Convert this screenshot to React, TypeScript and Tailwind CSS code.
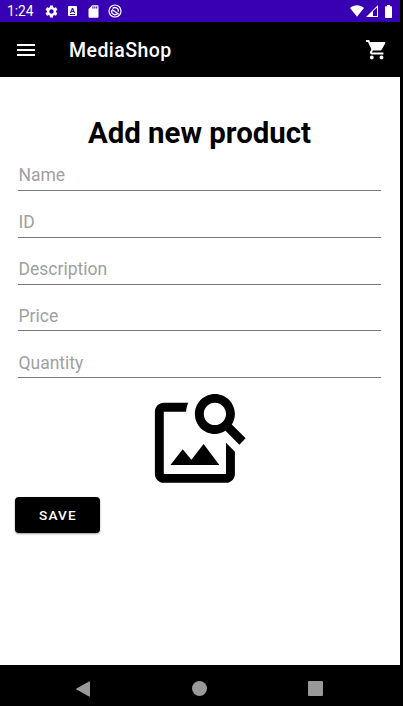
import type { ReactNode } from 'react';

function Icon({ className, children, viewBox = '0 0 24 24' }: { className: string; children: ReactNode; viewBox?: string }) {
  return (
    <svg viewBox={viewBox} fill="currentColor" className={`block shrink-0 ${className}`}>
      {children}
    </svg>
  );
}

function StatusBar() {
  return (
    <div className="flex h-[22px] shrink-0 items-center bg-[#3700b3] pl-[7px] pr-[8px] text-white">
      <span className="w-[36.500px] text-[13.800px] leading-[22px]">1:24</span>
      <Icon className="h-[15px] w-[15px]">
        <path d="M19.14 12.94c.04-.3.06-.61.06-.94 0-.32-.02-.64-.07-.94l2.03-1.58c.18-.14.23-.41.12-.61l-1.92-3.32c-.12-.22-.37-.29-.59-.22l-2.39.96c-.5-.38-1.03-.7-1.62-.94l-.36-2.54c-.04-.24-.24-.41-.48-.41h-3.84c-.24 0-.43.17-.47.41l-.36 2.54c-.59.24-1.13.57-1.62.94l-2.39-.96c-.22-.08-.47 0-.59.22L2.74 8.87c-.12.21-.08.47.12.61l2.03 1.58c-.05.3-.09.63-.09.94s.02.64.07.94l-2.03 1.58c-.18.14-.23.41-.12.61l1.92 3.32c.12.22.37.29.59.22l2.39-.96c.5.38 1.03.7 1.62.94l.36 2.54c.05.24.24.41.48.41h3.84c.24 0 .44-.17.47-.41l.36-2.54c.59-.24 1.13-.56 1.62-.94l2.39.96c.22.08.47 0 .59-.22l1.92-3.32c.12-.22.07-.47-.12-.61l-2.01-1.58zM12 15.6c-1.98 0-3.6-1.62-3.6-3.6s1.62-3.6 3.6-3.6 3.6 1.62 3.6 3.6-1.62 3.6-3.6 3.6z" />
      </Icon>
      <span className="ml-[9.500px] flex h-[10px] w-[9px] items-center justify-center rounded-[1px] bg-white text-[8px] font-bold leading-none text-[#3700b3] underline">A</span>
      <Icon className="ml-[9px] h-[15px] w-[15px]">
        <path fillRule="evenodd" d="M18 2h-8L4.020 8 4 20c0 1.100.9 2 2 2h12c1.100 0 2-.9 2-2V4c0-1.100-.9-2-2-2zM12 7h-1.800V4H12v3zm3 0h-1.800V4H15v3zm3 0h-1.800V4H18v3z" />
      </Icon>
      <Icon className="ml-[7px] h-[14px] w-[14px]" viewBox="0 0 14 14">
        <circle cx="7" cy="7" r="6" fill="none" stroke="currentColor" strokeWidth="1.200" />
        <path d="M9.500 9.500A3.400 3.400 0 0 1 3.700 6.300M4.600 4.500A3.400 3.400 0 0 1 10.300 7.600M4 5.500L10.800 10.300" fill="none" stroke="currentColor" strokeWidth="1.300" />
      </Icon>
      <div className="ml-auto flex items-center">
        <Icon className="h-[12px] w-[14px]" viewBox="0 0 14 12">
          <path d="M0 3C4-.7 10-.7 14 3L7 11.800z" />
        </Icon>
        <Icon className="ml-[2px] h-[12px] w-[12px]" viewBox="0 0 12 12">
          <path fillRule="evenodd" d="M0 12L12 0v12zM7 6.200V11h4V2.400z" />
        </Icon>
        <Icon className="ml-[7px] h-[13px] w-[7px]" viewBox="0 0 7 13">
          <path d="M2 0h3v1.200h1.300q.7 0 .7.700v10.400q0 .7-.7.700H.7q-.7 0-.7-.7V1.900q0-.7.7-.7H2z" />
        </Icon>
      </div>
    </div>
  );
}

function AppBar() {
  return (
    <header className="flex h-[55px] shrink-0 items-center bg-black pl-[14px] pr-[12px] text-white">
      <Icon className="h-6 w-6">
        <path d="M3 18h18v-2H3v2zm0-5h18v-2H3v2zm0-7v2h18V6H3z" />
      </Icon>
      <h1 className="ml-[31px] pt-[2px] text-[19.500px] font-medium leading-[24px] tracking-[0.450px]">MediaShop</h1>
      <Icon className="ml-auto h-[23.300px] w-[23.300px]">
        <path d="M7 18c-1.100 0-1.990.9-1.990 2S5.900 22 7 22s2-.9 2-2-.9-2-2-2zM1 2v2h2l3.600 7.590-1.350 2.450c-.16.280-.25.610-.25.960 0 1.100.9 2 2 2h12v-2H7.420c-.14 0-.25-.11-.25-.25l.03-.12.900-1.630h7.450c.75 0 1.410-.41 1.750-1.030l3.580-6.490c.08-.14.12-.31.12-.48 0-.55-.45-1-1-1H5.210l-.94-2H1zm16 16c-1.100 0-1.990.9-1.990 2s.89 2 1.990 2 2-.9 2-2-.9-2-2-2z" />
      </Icon>
    </header>
  );
}

const fields = [
  { label: 'Name', style: 'h-[39px] pb-[4px]' },
  { label: 'ID', style: 'h-[47px] pb-[4px]' },
  { label: 'Description', style: 'h-[47px] pb-[4px]' },
  { label: 'Price', style: 'h-[46px] pb-[3px]' },
  { label: 'Quantity', style: 'h-[47px] pb-[3px]' },
];

export default function App() {
  return (
    <div className="flex h-[706px] w-[403px] flex-col overflow-hidden bg-black font-['Roboto',sans-serif]">
      <div className="flex w-[400px] flex-1 flex-col bg-white">
        <StatusBar />
        <AppBar />
        <main className="flex flex-1 flex-col">
          <h2 className="mt-[38px] h-[37px] pr-px text-center text-[29.400px] font-bold leading-[37px] text-black">Add new product</h2>
          <form className="ml-[18px] w-[363px]">
            {fields.map((f) => (
              <label key={f.label} className={`flex items-end border-b border-[#777] ${f.style}`}>
                <input
                  placeholder={f.label}
                  aria-label={f.label}
                  className="block h-[22px] w-full bg-transparent pl-[0.500px] text-[17.500px] leading-[22px] outline-none placeholder:text-[#a0a0a0]"
                />
              </label>
            ))}
          </form>
          <Icon className="ml-[146px] mt-[7px] h-[106.700px] w-[106.700px] text-black">
            <path d="M18 13v7H4V6h5.020c.05-.71.22-1.380.48-2H4c-1.100 0-2 .9-2 2v14c0 1.100.9 2 2 2h14c1.100 0 2-.9 2-2v-5l-2-2zm-1.500 5h-11l2.750-3.530 1.960 2.360 2.750-3.540zm2.800-9.110c.44-.7.700-1.510.700-2.390C20 4.010 17.990 2 15.500 2S11 4.010 11 6.500s2.010 4.500 4.490 4.500c.88 0 1.700-.26 2.390-.7L21 13.420 22.420 12 19.300 8.890zM15.500 9C14.120 9 13 7.880 13 6.500S14.120 4 15.500 4 18 5.120 18 6.500 16.880 9 15.500 9z" />
          </Icon>
          <button className="ml-[15px] mt-[5px] h-[36px] w-[85px] rounded-[4px] bg-black pl-[1px] pt-[2px] text-[13.600px] font-medium tracking-[1.220px] text-white shadow-[0_1px_2px_rgba(0,0,0,0.4)]">
            SAVE
          </button>
        </main>
      </div>
      <nav className="flex h-[41px] shrink-0 items-center pl-[76px] pt-[6px] text-[#999]">
        <Icon className="h-[16px] w-[14px]" viewBox="0 0 14 16">
          <path d="M13 .5q1-.5 1 .5v14q0 1-1 .5L.5 8.600Q-.3 8 .5 7.400z" />
        </Icon>
        <span className="ml-[102px] h-[15px] w-[15px] rounded-full bg-[#999]" />
        <span className="ml-[101px] h-[15px] w-[15px] rounded-[1px] bg-[#999]" />
      </nav>
    </div>
  );
}
